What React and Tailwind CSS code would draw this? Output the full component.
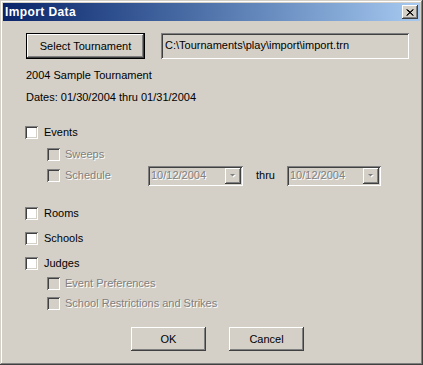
const raised =
  'shadow-[inset_-1px_-1px_#404040,inset_1px_1px_#fff,inset_-2px_-2px_#808080,inset_2px_2px_#d4d0c8]';
const sunken =
  'shadow-[inset_1px_1px_#808080,inset_-1px_-1px_#fff,inset_2px_2px_#404040,inset_-2px_-2px_#d4d0c8]';
const disabledText = 'text-[#808080] [text-shadow:1px_1px_0_#fff]';

function Check({ label, disabled, sub }) {
  return (
    <div className={`flex items-center h-[13px] ${sub ? 'ml-[44px]' : 'ml-[22px]'}`}>
      <span className={`w-[13px] h-[13px] shrink-0 ${sunken} ${disabled ? 'bg-[#d4d0c8]' : 'bg-white'}`} />
      <span className={`${sub ? 'ml-[5px]' : 'ml-[6px]'} leading-[13px] ${disabled ? disabledText : ''}`}>{label}</span>
    </div>
  );
}

function Combo({ w }) {
  return (
    <div className={`relative h-[20px] ${w} bg-[#d4d0c8] ${sunken} flex items-center`}>
      <span className={`pl-[3px] ${disabledText}`}>10/12/2004</span>
      <span className={`absolute right-[2px] top-[2px] w-[16px] h-[16px] bg-[#d4d0c8] ${raised} flex items-center justify-center`}>
        <svg width="9" height="6" viewBox="0 0 9 6">
          <path d="M2 2h5L4.5 4.5z" fill="#fff" />
          <path d="M1 1h5L3.5 3.5z" fill="#808080" />
        </svg>
      </span>
    </div>
  );
}

export default function App() {
  return (
    <div className="w-[423px] h-[365px] bg-[#d4d0c8] p-[3px] shadow-[inset_-1px_-1px_#404040,inset_1px_1px_#d4d0c8,inset_-2px_-2px_#808080,inset_2px_2px_#fff] font-['Liberation_Sans',Arial,sans-serif] text-[11px] text-black">
      <div className="h-[18px] bg-linear-to-r from-[#0a246a] to-[#a6caf0] flex items-center justify-between pl-[2px] pr-[2px]">
        <span className="text-white font-bold text-[12px] tracking-[0.4px] leading-[18px]">Import Data</span>
        <span className={`w-[16px] h-[14px] bg-[#d4d0c8] ${raised} flex items-center justify-center`}>
          <svg width="8" height="7" viewBox="0 0 8 7">
            <path d="M0.5 0.5L7 6.5M1.5 0.5L7.5 6.5M7 0.5L0.5 6.5M7.5 0.5L1 6.5" stroke="#000" strokeWidth="1" />
          </svg>
        </span>
      </div>

      <div className="flex mt-[12px] ml-[23px] h-[26px]">
        <button className={`w-[119px] h-[26px] border border-black bg-[#d4d0c8] ${raised} flex items-center justify-center`}>
          Select Tournament
        </button>
        <div className={`ml-[16px] w-[248px] h-[26px] bg-[#d4d0c8] ${sunken} flex items-center pl-[4px] pb-[2px]`}>
          C:\Tournaments\play\import\import.trn
        </div>
      </div>

      <div className="ml-[23px] mt-[8px] leading-[16px] h-[16px]">2004 Sample Tournament</div>
      <div className="ml-[23px] mt-[6px] leading-[16px] h-[16px]">Dates: 01/30/2004 thru 01/31/2004</div>

      <div className="mt-[21px]">
        <Check label="Events" />
      </div>
      <div className="mt-[9px]">
        <Check label="Sweeps" disabled sub />
      </div>
      <div className="mt-[4px] flex items-center h-[21px]">
        <div className="w-[145px] shrink-0">
          <Check label="Schedule" disabled sub />
        </div>
        <Combo w="w-[95px]" />
        <span className="ml-[13px] w-[31px]">thru</span>
        <Combo w="w-[94px]" />
      </div>

      <div className="mt-[21px]">
        <Check label="Rooms" />
      </div>
      <div className="mt-[12px]">
        <Check label="Schools" />
      </div>
      <div className="mt-[12px]">
        <Check label="Judges" />
      </div>
      <div className="mt-[7px]">
        <Check label="Event Preferences" disabled sub />
      </div>
      <div className="mt-[7px]">
        <Check label="School Restrictions and Strikes" disabled sub />
      </div>

      <div className="flex ml-[128px] mt-[17px] gap-[23px]">
        <button className={`w-[75px] h-[24px] bg-[#d4d0c8] ${raised}`}>OK</button>
        <button className={`w-[75px] h-[24px] bg-[#d4d0c8] ${raised}`}>Cancel</button>
      </div>
    </div>
  );
}
